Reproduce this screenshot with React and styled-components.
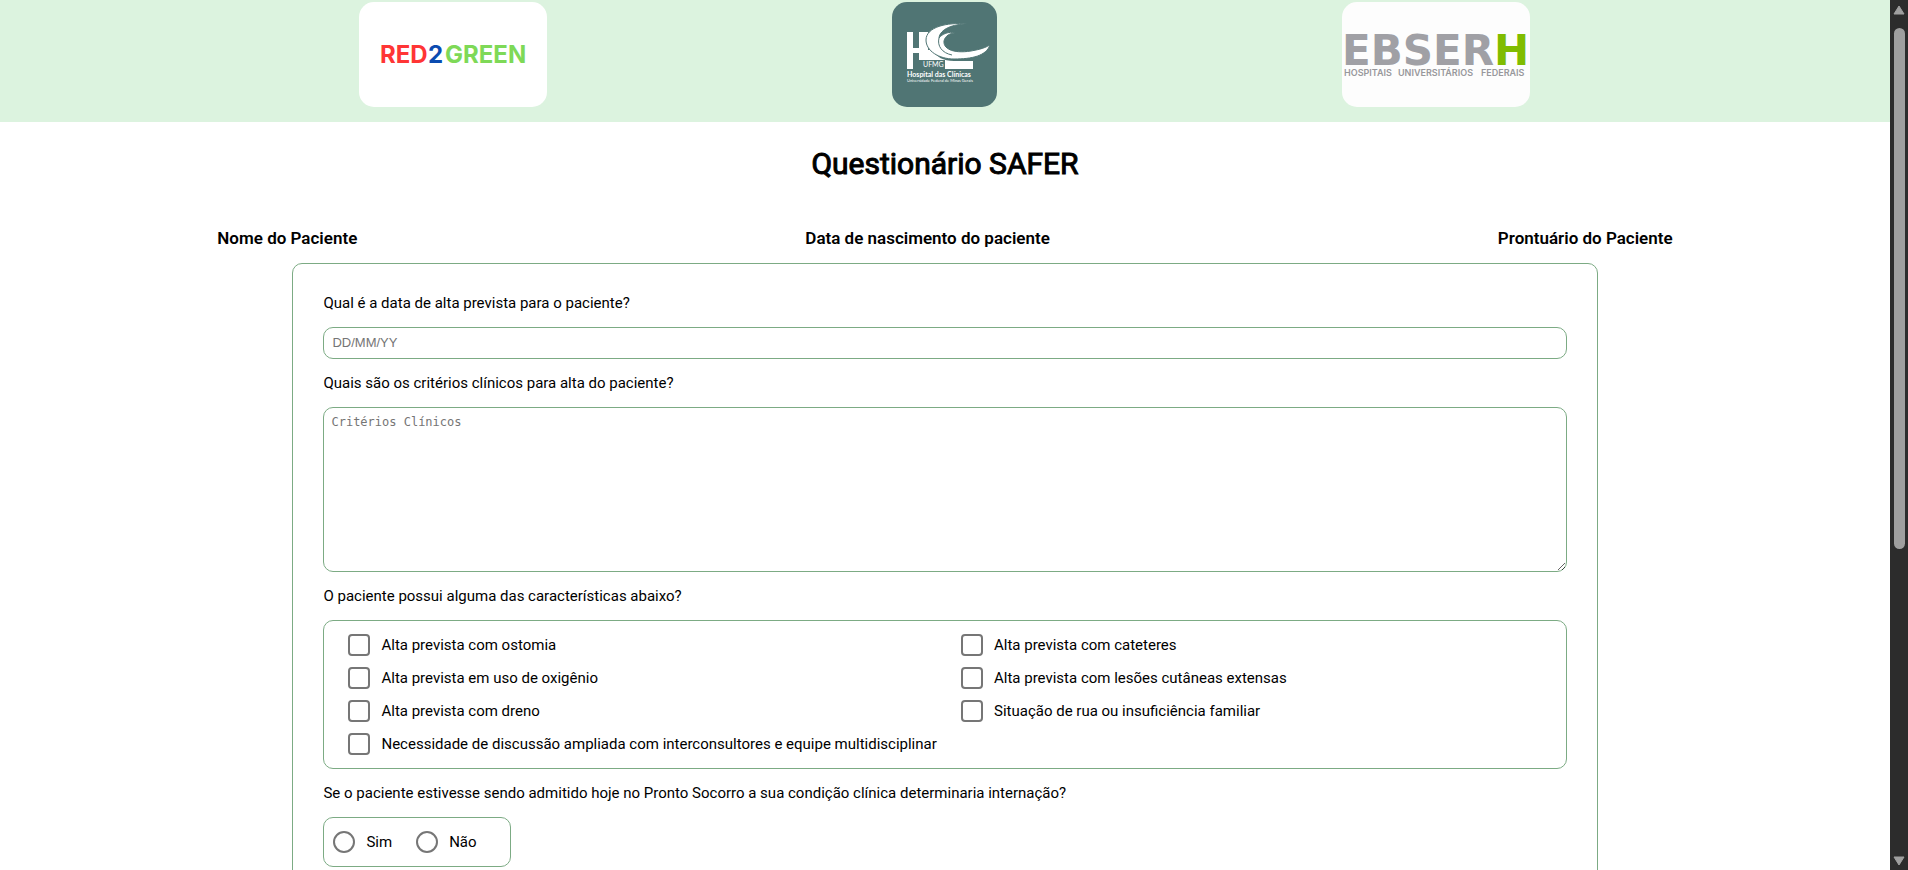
import React from "react";
import styled, { createGlobalStyle, css } from "styled-components";

const GlobalStyle = createGlobalStyle`
  *, *::before, *::after { box-sizing: border-box; }
  body {
    margin: 0;
    background: #fff;
    color: #000;
    font-family: Roboto, "Liberation Sans", sans-serif;
    font-size: 15px;
    line-height: 18px;
  }
`;

const outlined = css`
  border: 1px solid #7cab84;
  border-radius: 10px;
`;

const Viewport = styled.div`
  display: flex;
  height: 100vh;
  overflow: hidden;
`;

const Page = styled.div`
  flex: 1;
  min-width: 0;
  overflow: hidden;
`;

const Header = styled.header`
  display: flex;
  justify-content: space-evenly;
  align-items: flex-start;
  height: 122px;
  padding: 2px 15px 0 14px;
  background: #dcf3df;
`;

const LogoCard = styled.div`
  width: ${({ $square }) => ($square ? 105 : 188)}px;
  height: 105px;
  border-radius: 15px;
  overflow: hidden;
  background: ${({ $tone }) => $tone || "#fff"};

  svg { display: block; }
`;

const Title = styled.h1`
  margin: 24px 0 0;
  font-size: 30px;
  line-height: 36px;
  font-weight: 400;
  -webkit-text-stroke: 1px #000;
  text-align: center;
`;

const PatientRow = styled.div`
  display: flex;
  justify-content: space-between;
  margin: 44px auto 0;
  width: 77%;
`;

const PatientField = styled.h2`
  margin: 0;
  font-size: 17px;
  line-height: 24px;
  font-weight: 600;
`;

const Form = styled.form`
  width: calc(69% + 1px);
  margin: 13px auto 40px;
  padding: 15px 30px;
  ${outlined}
`;

const Question = styled.label`
  display: block;
  margin: 15px 0;
`;

const Group = styled.fieldset`
  margin: 0;
  padding: 0;
  border: 0;
  min-width: 0;
`;

const GroupQuestion = styled.legend`
  float: left;
  width: 100%;
  margin: 15px 0;
  padding: 0;
`;

const DateInput = styled.input`
  display: block;
  width: 100%;
  height: 32px;
  padding: 0 8px 2px;
  ${outlined}
  font-family: "Liberation Sans", sans-serif;
  font-size: 13px;

  &::placeholder { color: #757575; }
`;

const NotesInput = styled.textarea`
  display: block;
  width: 100%;
  height: 165px;
  padding: 7px;
  ${outlined}
  font-family: "DejaVu Sans Mono", monospace;
  font-size: 12px;
  resize: both;

  &::placeholder { color: #757575; }
`;

const OptionBox = styled.div`
  clear: both;
  ${outlined}
`;

const CheckGrid = styled(OptionBox)`
  display: grid;
  grid-template-columns: 1fr 1fr;
  column-gap: 8px;
  padding: 7px 0 8px 24px;
`;

const RadioRow = styled(OptionBox)`
  display: flex;
  align-items: center;
  gap: 24px;
  width: 188px;
  height: 50px;
  padding: 0 9px;
`;

const Option = styled.label`
  display: flex;
  align-items: center;
  gap: 11px;
  height: ${({ $row }) => ($row ? 33 : 22)}px;
  grid-column: ${({ $wide }) => ($wide ? "1 / -1" : "auto")};
`;

const Tick = styled.input`
  appearance: none;
  width: 22px;
  height: 22px;
  margin: 0;
  border: 2px solid #767676;
  border-radius: ${({ type }) => (type === "radio" ? "50%" : "4px")};
  background: #fff;

  &:checked {
    background: #0075ff;
    box-shadow: inset 0 0 0 3px #fff;
  }
`;

const ScrollTrack = styled.div`
  display: flex;
  flex-direction: column;
  align-items: center;
  width: 18px;
  padding: 5px 0 4px;
  background: #2c2c2c;

  svg { display: block; }
`;

const ScrollThumb = styled.div`
  width: 11px;
  height: calc(60% + 4px);
  margin: 13px 0 auto;
  border-radius: 6px;
  background: #9f9f9f;
`;

const RedGreenLogo = () => (
  <svg width="188" height="105" viewBox="0 0 188 105" role="img" aria-label="RED2GREEN">
    <g fontFamily="Inter, sans-serif" fontSize="24" fontWeight="700">
      <text x="21" y="61" fill="#ff3535">RED</text>
      <text x="69" y="61" fill="#0b4bb0">2</text>
      <text x="86" y="61" fill="#7ed957">GREEN</text>
    </g>
  </svg>
);

const HospitalLogo = () => (
  <svg width="105" height="105" viewBox="0 0 105 105" role="img" aria-label="Hospital das Clínicas UFMG">
    <path d="M15 30H21V46H27V30H36V48H40C45 55 51 59 62 59H81V67H53V58H27V51H21V67H15Z" fill="#fff" />
    <path
      d="M75 22C55 20 34 25 34 38C34 49 47 57 62 57C80 57 94 54 98 43C91 47 84 48 79 49C60 52 51 46 52 39C53 34 58 31 63 31C57 29 50 32 47 36C48 27 61 22 75 22Z"
      fill="#fff"
      stroke="#507574"
      strokeWidth="1"
    />
    <path d="M47 36C45 44 50 51 60 53" fill="none" stroke="#507574" strokeWidth="1" />
    <g fill="#fff" fontFamily="Lato, sans-serif">
      <text x="31" y="65" fontSize="7">UFMG</text>
      <text x="15" y="75" fontSize="7" fontWeight="700">Hospital das Clínicas</text>
      <text x="15" y="80" fontSize="4">Universidade Federal de Minas Gerais</text>
    </g>
  </svg>
);

const EbserhLogo = () => (
  <svg width="188" height="105" viewBox="0 0 188 105" role="img" aria-label="EBSERH">
    <text x="0" y="63" fill="#a0a0a5" fontFamily="DejaVu Sans, sans-serif" fontSize="42" fontWeight="700">
      EBSER<tspan fill="#80bc00">H</tspan>
    </text>
    <g fill="#98989c" fontFamily="Inter, sans-serif" fontSize="9" fontWeight="600">
      <text x="2" y="74">HOSPITAIS</text>
      <text x="56" y="74">UNIVERSITÁRIOS</text>
      <text x="139" y="74">FEDERAIS</text>
    </g>
  </svg>
);

const characteristics = [
  "Alta prevista com ostomia",
  "Alta prevista com cateteres",
  "Alta prevista em uso de oxigênio",
  "Alta prevista com lesões cutâneas extensas",
  "Alta prevista com dreno",
  "Situação de rua ou insuficiência familiar",
  "Necessidade de discussão ampliada com interconsultores e equipe multidisciplinar",
];

export default function App() {
  return (
    <>
      <GlobalStyle />
      <Viewport>
        <Page>
          <Header>
            <LogoCard><RedGreenLogo /></LogoCard>
            <LogoCard $square $tone="#507574"><HospitalLogo /></LogoCard>
            <LogoCard $tone="#fdfdfd"><EbserhLogo /></LogoCard>
          </Header>
          <main>
            <Title>Questionário SAFER</Title>
            <PatientRow>
              <PatientField>Nome do Paciente</PatientField>
              <PatientField>Data de nascimento do paciente</PatientField>
              <PatientField>Prontuário do Paciente</PatientField>
            </PatientRow>
            <Form>
              <Question htmlFor="discharge">Qual é a data de alta prevista para o paciente?</Question>
              <DateInput id="discharge" type="text" placeholder="DD/MM/YY" />
              <Question htmlFor="criteria">Quais são os critérios clínicos para alta do paciente?</Question>
              <NotesInput id="criteria" placeholder="Critérios Clínicos" />
              <Group>
                <GroupQuestion>O paciente possui alguma das características abaixo?</GroupQuestion>
                <CheckGrid>
                  {characteristics.map((text, i) => (
                    <Option key={text} $row $wide={i === characteristics.length - 1}>
                      <Tick type="checkbox" />
                      {text}
                    </Option>
                  ))}
                </CheckGrid>
              </Group>
              <Group>
                <GroupQuestion>
                  Se o paciente estivesse sendo admitido hoje no Pronto Socorro a sua condição clínica determinaria internação?
                </GroupQuestion>
                <RadioRow>
                  <Option><Tick type="radio" name="admission" />Sim</Option>
                  <Option><Tick type="radio" name="admission" />Não</Option>
                </RadioRow>
              </Group>
            </Form>
          </main>
        </Page>
        <ScrollTrack aria-hidden="true">
          <svg width="12" height="10" viewBox="0 0 12 10"><path d="M6 1L11 9H1Z" fill="#9f9f9f" stroke="#9f9f9f" strokeLinejoin="round" /></svg>
          <ScrollThumb />
          <svg width="12" height="10" viewBox="0 0 12 10"><path d="M6 9L11 1H1Z" fill="#9f9f9f" stroke="#9f9f9f" strokeLinejoin="round" /></svg>
        </ScrollTrack>
      </Viewport>
    </>
  );
}
